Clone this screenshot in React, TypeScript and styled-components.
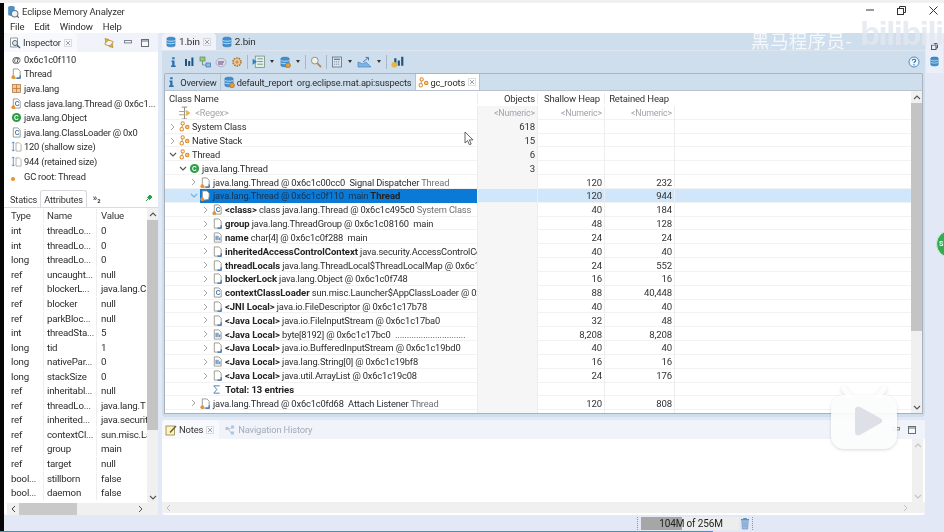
import React from "react";
import styled, { createGlobalStyle } from "styled-components";

const Global = createGlobalStyle`
  html, body { margin: 0; padding: 0; background: #e3e8f6; overflow: hidden; }
  #root { width: 944px; height: 532px; }
`;

const Screen = styled.div`
  position: relative; width: 944px; height: 532px; overflow: hidden;
  display: flex; flex-direction: column;
  font-family: Roboto, "Noto Sans CJK SC", sans-serif; font-size: 9.3px; letter-spacing: -.15px; color: #2c2c2c;
  background: #e3e8f6; filter: blur(0.35px);
  svg { flex: none; }
`;
const TopEdge = styled.div`height: 3px; background: #f0f0f0; flex: none;`;
const Frame = styled.div`flex: 1; display: flex; min-height: 0;`;
const BlackEdge = styled.div`width: 4px; background: #050505; flex: none;`;
const Window = styled.div`flex: 1; display: flex; flex-direction: column; min-width: 0;`;
const TitleBar = styled.div`height: 16px; background: #fff; display: flex; align-items: center; gap: 3px; padding-left: 2px; flex: none; font-size: 9.5px; color: #333;`;
const TitleText = styled.span`flex: 1;`;
const WinButtons = styled.div`display: flex; align-items: center; gap: 23px; padding: 0 6px 2px 0; color: #333;`;
const MenuBar = styled.div`height: 14px; background: #fff; display: flex; align-items: center; gap: 10px; padding-left: 6px; flex: none; font-size: 9.5px;`;
const Workbench = styled.div`flex: 1; display: flex; min-height: 0;`;
const LeftCol = styled.div`width: 154px; flex: none; display: flex; flex-direction: column;`;
const MainCol = styled.div`width: 763px; margin-left: 4px; flex: none; display: flex; flex-direction: column;`;
const Trim = styled.div`flex: 1; display: flex; flex-direction: column; align-items: center;`;
const Panel = styled.div<{ $grow?: boolean }>`
  background: #fff; border-radius: 3px; display: flex; flex-direction: column; overflow: hidden;
  ${p => p.$grow ? "flex: 1; min-height: 0;" : ""}
`;
const NotesPanel = styled(Panel)`height: 95px; flex: none; margin-top: 3px;`;
const ViewTabs = styled.div`height: 19px; flex: none; display: flex; align-items: center; background: #f1f3fb; position: relative;`;
const ViewTab = styled.div<{ $dim?: boolean; $active?: boolean; $pl: number }>`
  height: 19px; display: flex; align-items: center; gap: 2px; padding: 0 5px 0 ${p => p.$pl}px;
  color: ${p => p.$dim ? "#a4abb6" : "#333"};
  background: ${p => p.$active ? "#f8f9fc" : "transparent"};
  border-radius: 4px 4px 0 0; font-size: 9.4px;
`;
const CloseBox = styled.span`display: flex; margin-left: 1px;`;
const Spacer = styled.div`flex: 1;`;
const ViewIcons = styled.div<{ $gap: number }>`display: flex; align-items: center; gap: ${p => p.$gap}px; padding-right: 9px;`;
const InspectorList = styled.div`flex: none; padding: 0 0 0 7px; height: 134px;`;
const InfoRow = styled.div`height: 14.6px; display: flex; align-items: center; gap: 2px; white-space: nowrap; overflow: hidden; font-size: 9.3px; letter-spacing: -.2px;`;
const IconSlot = styled.span`width: 11px; height: 11px; flex: none; display: inline-flex; align-items: center; justify-content: center;`;
const SubTabs = styled.div`height: 18px; margin-top: 3px; flex: none; display: flex; align-items: flex-end; padding-left: 3px; font-size: 9.2px; position: relative; border-bottom: 1px solid #d8dbe0;`;
const SubTab = styled.div<{ $active?: boolean }>`
  height: 15px; display: flex; align-items: center; padding: 0 3px; color: #333;
  ${p => p.$active ? "border: 1px solid #d5d8dd; border-bottom: none; border-radius: 3px 3px 0 0; background:#fff; height:16px;" : ""}
`;
const More = styled.span`padding-left: 6px; font-size: 9px; font-weight: 700; color: #444; align-self: center;`;
const Pin = styled.span`position: absolute; right: 6px; top: 6px; display: flex;`;
const AttrArea = styled.div`flex: 1; display: flex; min-height: 0; padding-left: 3px;`;
const AttrTable = styled.div`flex: 1; min-width: 0; display: flex; flex-direction: column; overflow: hidden;`;
const AttrRow = styled.div`height: 14.55px; flex: none; display: grid; grid-template-columns: 36px 54px 1fr; font-size: 9.7px; letter-spacing: -.2px; align-items: center;`;
const AttrHead = styled(AttrRow)`height: 16px; padding-top: 1px; box-sizing: border-box; color: #333; align-items: start;`;
const AttrCell = styled.div`white-space: nowrap; overflow: hidden; padding-left: 4px; line-height: 14px;`;
const AttrNameCell = styled(AttrCell)`border-left: 1px solid #edeef0; border-right: 1px solid #edeef0; padding-left: 3px;`;
const VScroll = styled.div`width: 11px; flex: none; background: #f0f0f0; display: flex; flex-direction: column; align-items: center;`;
const Thumb = styled.div<{ $h: number }>`background: #c4c4c4; width: 100%; height: ${p => p.$h}px; flex: none;`;
const Arrow = styled.div`height: 12px; width: 100%; flex: none; display: flex; align-items: center; justify-content: center;`;
const ArrowEnd = styled(Arrow)`margin-top: auto;`;
const HScroll = styled.div`height: 12px; flex: none; display: flex; align-items: center; background: #f0f0f0; margin-left: 3px;`;
const HThumb = styled.div<{ $w: number }>`height: 12px; background: #c9c9c9; width: ${p => p.$w}px; flex: none;`;
const HArrow = styled.div`width: 12px; height: 12px; flex: none; display: flex; align-items: center; justify-content: center;`;
const EditorTabs = styled.div`height: 17px; flex: none; background: #cfdeed; display: flex; align-items: flex-end;`;
const EditorTab = styled.div<{ $active?: boolean }>`
  height: 17px; display: flex; align-items: center; gap: 2px; font-size: 9.9px;
  padding: 0 5px 0 ${p => p.$active ? 3 : 5}px;
  background: ${p => p.$active ? "#eff3f9" : "transparent"}; border-radius: 4px 4px 0 0;
`;
const EditorBody = styled.div`flex: 1; min-height: 0; display: flex; flex-direction: column; background: #cfdeed; padding: 0 2px 3px 2px; border-top: 1px solid #dfe5ef;`;
const Toolbar = styled.div`height: 22px; flex: none; display: flex; align-items: center; padding: 0 0 1px 3px; gap: 4px; box-sizing: border-box;`;
const ToolSep = styled.span`width: 1px; height: 14px; background: #a9b6c6;`;
const Drop = styled.span`width: 0; height: 0; border-left: 2.5px solid transparent; border-right: 2.5px solid transparent; border-top: 3px solid #333; margin: 0 1px;`;
const HelpBtn = styled.span`margin-left: auto; margin-right: 3px; display: flex;`;
const InfoBox = styled.span`display: flex; width: 12px; justify-content: center;`;
const InnerTabs = styled.div`height: 16px; flex: none; background: #cfdeed; border: 1px solid #aab4c0; border-bottom: 1px solid #b8c3cf; border-radius: 2px 2px 0 0; display: flex; align-items: stretch;`;
const InnerTab = styled.div<{ $active?: boolean }>`
  display: flex; align-items: center; gap: 2px; padding: 0 3px 0 2px; font-size: 9.3px; white-space: nowrap;
  border-right: 1px solid #b8c3cf;
  background: ${p => p.$active ? "#fff" : "transparent"};
`;
const TableWrap = styled.div`flex: 1; min-height: 0; display: flex; background: #fff; border: 1px solid #aab0b8; border-top: none; overflow: hidden;`;
const TableMain = styled.div`flex: 1; min-width: 0; overflow: hidden;`;
const Grid = styled.div`display: flex; flex-direction: column;`;
const Row = styled.div<{ $sel?: boolean }>`
  height: 13.83px; flex: none; display: grid; grid-template-columns: 312px 60px 67px 70px 1fr;
  box-shadow: inset 0 -1px 0 #f2f2f2; align-items: center;
  ${p => p.$sel ? "background: #cfe6fb;" : ""}
`;
const HeadRow = styled(Row)`height: 15px; box-shadow: none; color: #333; font-size: 9.5px;`;
const NameCell = styled.div<{ $indent: number }>`
  position: relative; display: flex; align-items: center; height: 100%; white-space: nowrap; overflow: hidden;
  padding-left: ${p => p.$indent}px; gap: 2px; min-width: 0;
`;
const Chevron = styled.span`width: 9px; flex: none; display: inline-flex; justify-content: center; align-items: center;`;
const NameBody = styled.span<{ $sel?: boolean }>`
  display: inline-flex; flex: 1; min-width: 0; gap: 2px; height: 100%; align-items: center; overflow: hidden;
  ${p => p.$sel ? "background: #0a7ad6; color: #14324e;" : ""}
`;
const Muted = styled.span`color: #707070;`;
const Leader = styled.span`color: #3a3a3a; letter-spacing: -.1px;`;
const RegexText = styled.span`color: #a5a5a5; font-size: 9.2px;`;
const Strong = styled.b`font-weight: 700; color: #222; font-size: 9.5px; letter-spacing: -.03px;`;
const NumCell = styled.div<{ $shade?: boolean; $dim?: boolean }>`
  height: 100%; display: flex; align-items: center; justify-content: flex-end; padding-right: 2px;
  ${p => p.$shade ? "background: #f6f6f7;" : ""}
  border-left: 1px solid #ededed;
  color: ${p => p.$dim ? "#9ea3a8" : "#333"};
  font-size: ${p => p.$dim ? "8.8px" : "9.6px"};
`;
const HeadCell = styled.div`padding-left: 4px; white-space: nowrap;`;
const HeadNum = styled.div<{ $pad: number }>`text-align: right; padding-right: ${p => p.$pad}px; white-space: nowrap; border-left: 1px solid #ededed;`;
const ScrollPad = styled.div`width: 11px; flex: none; background: #f0f0f0; display: flex; flex-direction: column;`;
const NotesBody = styled.div`flex: 1; min-height: 0; display: flex; padding-right: 2px;`;
const NotesText = styled.div`flex: 1; background: #fff;`;
const NotesScroll = styled.div`width: 11px; background: #f0f0f0; display: flex; flex-direction: column;`;
const NotesH = styled.div`height: 11px; background: #f0f0f0; display: flex; justify-content: space-between; align-items: center; padding: 0 17px 0 4px; flex: none; margin-bottom: 2px;`;
const Status = styled.div`height: 17px; flex: none; display: flex; align-items: center; padding-left: 631px;`;
const HeapBar = styled.div`width: 98px; height: 13px; background: #ededed; position: relative; display: flex; align-items: center; justify-content: center; font-size: 10px;`;
const HeapFill = styled.div`position: absolute; left: 0; top: 0; bottom: 0; width: 41px; background: #a6a6a6;`;
const HeapText = styled.span`position: relative; color: #222; padding-left: 2px;`;
const Trash = styled.span`margin-left: 1px; display: flex;`;
const Dots = styled.span`width: 1px; height: 13px; border-left: 1px dotted #8d93a0; margin: 0 2px;`;
const ProgressLine = styled.div`position: absolute; left: 0; bottom: 0; height: 1px; width: 713px; background: #1ea1d8;`;
const TrimBox = styled.div`width: 17px; height: 30px; background: #ebeff9; border-radius: 0 0 0 4px; display: flex; flex-direction: column; align-items: center; padding-top: 10px; gap: 6px; box-sizing: content-box;`;
const Watermark = styled.div`position: absolute; left: 751px; top: 27px; color: rgba(255,255,255,.78); font-size: 18.5px; letter-spacing: .4px; pointer-events: none; font-family: "Noto Sans CJK SC", sans-serif; white-space: nowrap;`;
const Bili = styled.div`position: absolute; left: 860px; top: 14px; color: rgba(226,231,239,.82); font-size: 33px; font-weight: 700; pointer-events: none; letter-spacing: -1.6px; font-family: "Liberation Sans", sans-serif; white-space: nowrap; line-height: 40px;`;
const TvBadge = styled.div`position: absolute; left: 829px; top: 383px; pointer-events: none; display: flex; filter: drop-shadow(0 1px 1.5px rgba(60,70,90,.22));`;
const Cursor = styled.div`position: absolute; left: 464px; top: 131px; pointer-events: none; display: flex;`;
const GreenBall = styled.div`position: absolute; left: 936px; top: 230px; width: 28px; height: 28px; border-radius: 50%; background: #33ac55; border: 1px solid #d8e8dc; color: #fff; font-size: 7px; font-weight: 700; padding-left: 2px; display: flex; align-items: center; box-sizing: border-box;`;

/* ---------- icons ---------- */
const Svg: React.FC<{ s?: number; children: React.ReactNode }> = ({ s = 11, children }) => (
  <svg width={s} height={s} viewBox="0 0 12 12" fill="none">{children}</svg>
);
const Close = () => (
  <CloseBox>
    <svg width="8" height="8" viewBox="0 0 8 8" fill="none">
      <rect x=".5" y=".5" width="7" height="7" stroke="#aeb2b8" strokeWidth=".7" strokeDasharray="1.200 .8" />
      <path d="M2 2l4 4M6 2L2 6" stroke="#8f949b" strokeWidth=".9" />
    </svg>
  </CloseBox>
);
const FileI = ({ dot = false }) => (
  <Svg>
    <path d="M2.500 1h5l2.500 2.500V11H2.500z" fill="#fff" stroke="#8a8a80" strokeWidth=".9" />
    <path d="M10 8v3H6" stroke="#2f6fb5" strokeWidth="1.200" />
    {dot && <circle cx="2.500" cy="10" r="2" fill="#e8922a" />}
  </Svg>
);
const ClassI = ({ dot = false }) => (
  <Svg>
    <path d="M2.500 1h5l2.500 2.500V11H2.500z" fill="#fff" stroke="#8a8a80" strokeWidth=".9" />
    <text x="4" y="9" fontSize="7" fontWeight="700" fill="#3b76b6" fontFamily="Liberation Sans">C</text>
    {dot && <circle cx="2.500" cy="10" r="2" fill="#e8922a" />}
  </Svg>
);
const ArrayI = () => (
  <Svg>
    <path d="M2.500 1h5l2.500 2.500V11H2.500z" fill="#fff" stroke="#8a8a80" strokeWidth=".9" />
    <path d="M4.500 4v5M6.500 4v5M8.500 6v3" stroke="#3b76b6" strokeWidth="1.200" />
  </Svg>
);
const RootI = () => (
  <Svg>
    <circle cx="4" cy="2.600" r="1.800" stroke="#d98a2b" strokeWidth="1.100" />
    <circle cx="3" cy="9" r="1.900" stroke="#d98a2b" strokeWidth="1.100" />
    <circle cx="9" cy="6.600" r="1.900" stroke="#d98a2b" strokeWidth="1.100" fill="#f3c58a" />
    <path d="M3.500 4.500v2.500" stroke="#d98a2b" />
  </Svg>
);
const GreenC = () => (
  <Svg>
    <circle cx="6" cy="6" r="5" fill="#2f9e46" />
    <text x="3.400" y="8.400" fontSize="7" fontWeight="700" fill="#fff" fontFamily="Liberation Sans">C</text>
  </Svg>
);
const Db = ({ dot = false, s = 11 }) => (
  <Svg s={s}>
    <path d="M2 2.400C2 .8 10 .8 10 2.400v7.200c0 1.600-8 1.600-8 0z" fill="#3f8fd0" stroke="#2a6aa5" strokeWidth=".6" />
    <path d="M2 4.500c1.600 1 6.400 1 8 0M2 7c1.600 1 6.400 1 8 0" stroke="#d7ecfa" strokeWidth=".8" />
    {dot && <circle cx="9" cy="9.300" r="2.500" fill="#e09b3d" stroke="#8c6223" strokeWidth=".5" />}
  </Svg>
);
const InfoI = () => (
  <svg width="9" height="12" viewBox="0 0 9 12"><path d="M3.200 1.200h2.400v2H3.200zM2.500 4.500h3v5h1.200V11H2V9.500h1.200V6h-.7z" fill="#2a6fb0" /></svg>
);
const Bars = () => (
  <Svg s={12}><path d="M2 3h2v7H2zM5.200 5h2v5h-2zM8.400 1.500h2V10h-2z" fill="#20527e" /></Svg>
);
const Tree = () => (
  <Svg s={12}>
    <rect x="1" y="1" width="5" height="4" fill="#9ac77f" stroke="#5f8c4a" strokeWidth=".7" />
    <rect x="7" y="7" width="4.500" height="4" fill="#8cbce4" stroke="#3a73a8" strokeWidth=".7" />
    <path d="M3.500 5v4H7" stroke="#6b7c86" strokeWidth=".8" />
  </Svg>
);
const Oql = () => (
  <Svg s={12}><ellipse cx="6" cy="6.500" rx="5" ry="4.200" fill="#d9dde6" stroke="#9aa2b0" strokeWidth=".7" /><path d="M3 6h6M3 8h5" stroke="#6d3f90" strokeWidth="1" /></Svg>
);
const Gear = () => (
  <Svg s={12}><circle cx="6" cy="6" r="4" fill="#e9c597" stroke="#a97b3c" strokeWidth="1.600" strokeDasharray="1.600 .9" /><circle cx="6" cy="6" r="1.500" fill="#c99050" /></Svg>
);
const ListPlay = () => (
  <Svg s={13}>
    <rect x="3" y="1" width="8.500" height="10.500" fill="#e4eef2" stroke="#6f8a86" strokeWidth=".7" />
    <path d="M5 3.500h5M5 6h5M5 8.500h5" stroke="#71a36b" strokeWidth=".9" />
    <path d="M.6 3.500l4 2.700-4 2.700z" fill="#2f7fb8" />
  </Svg>
);
const Mag = () => (
  <Svg s={12}><circle cx="4.800" cy="4.600" r="3.400" fill="#f4f1e4" stroke="#8d9298" strokeWidth="1" /><path d="M7.400 7.400l3.600 3.600" stroke="#b08a4a" strokeWidth="1.800" /></Svg>
);
const Calc = () => (
  <Svg s={12}><rect x="1.500" y="1" width="9" height="10" fill="#d8e6ef" stroke="#5c7080" strokeWidth=".8" /><path d="M3 3.200h6" stroke="#45617a" strokeWidth="1.100" /><path d="M3 5.800h6M3 8.200h6" stroke="#7c93a5" strokeWidth="1" strokeDasharray="1.200 .8" /></Svg>
);
const Export = () => (
  <svg width="15" height="12" viewBox="0 0 15 12" fill="none"><path d="M1 11V6l5 2 3-2 5 5z" fill="#7fb4e6" stroke="#4a86c0" strokeWidth=".7" /><path d="M6 6l5-4M8.500 1.400h3v3" stroke="#3d7fbb" strokeWidth="1" /></svg>
);
const BarsPin = () => (
  <Svg s={13}><path d="M3 3h2v7H3zM6.200 5h2v5H6.200zM9.400 1.500h2V10h-2z" fill="#20527e" /><circle cx="3" cy="9" r="2.600" fill="#e7b54a" /></Svg>
);
const Help = () => (
  <svg width="12" height="12" viewBox="0 0 12 12" fill="none"><circle cx="6" cy="6" r="5" fill="#f1f6fb" stroke="#4d8ac2" strokeWidth="1" /><path d="M4.300 4.600c.2-2 3.600-1.800 3.400.2-.1 1-1.700 1.100-1.700 2.200" stroke="#2b6ca8" strokeWidth="1.100" /><circle cx="6" cy="8.800" r=".7" fill="#2b6ca8" /></svg>
);
const InspectI = () => (
  <Svg s={12}><path d="M1.500 1h7v9h-7z" fill="#fff" stroke="#7a7f86" strokeWidth=".8" /><circle cx="6" cy="6" r="2.500" fill="#dceaf4" stroke="#4c5a68" strokeWidth=".9" /><path d="M8 8l3 3" stroke="#4c5a68" strokeWidth="1.200" /></Svg>
);
const SyncI = () => (
  <Svg s={12}><path d="M2 1.500l4 1-3 3zM10 10.500l-4-1 3-3z" fill="#e1b03f" stroke="#a57b1f" strokeWidth=".6" /><path d="M5 3l5 1.500-.5 3M7 9L2 7.500l.5-3" stroke="#c99a30" strokeWidth="1" /></Svg>
);
const MinI = () => <svg width="8" height="5" viewBox="0 0 8 5"><rect x=".5" y=".5" width="7" height="2.400" fill="#f3f4f8" stroke="#7d8490" /></svg>;
const MaxI = () => <svg width="8" height="8" viewBox="0 0 8 8"><rect x=".5" y=".5" width="7" height="7" fill="#f8f9fb" stroke="#666c76" /><path d="M.5 2h7" stroke="#666c76" /></svg>;
const At = () => <Svg><text x="1" y="9.500" fontSize="10" fontWeight="700" fill="#333" fontFamily="Liberation Sans">@</text></Svg>;
const Pkg = () => <Svg><rect x="1.500" y="1.500" width="9" height="9" fill="#edc9a4" stroke="#b5763a" strokeWidth=".8" /><path d="M6 1.500v9M1.500 6h9" stroke="#b5763a" strokeWidth=".8" /></Svg>;
const SizeI = () => (
  <Svg>
    <path d="M2.500 1v10M1 2.500L2.500 1 4 2.500M1 9.500L2.500 11 4 9.500" stroke="#3c7bb5" strokeWidth=".8" />
    <path d="M5.500 2h3.500l2 2v7H5.500z" fill="#fff" stroke="#9a9a90" strokeWidth=".8" />
  </Svg>
);
const Sigma = () => <Svg><path d="M9.500 2H3l3.500 4L3 10h6.500" stroke="#4b78aa" strokeWidth="1" /></Svg>;
const RegexI = () => (
  <Svg s={13}><path d="M6 1v11M3.500 1h5M3.500 12h5" stroke="#8d8d8d" strokeWidth=".9" /><path d="M1 5h6M1 8h6" stroke="#b9a476" strokeWidth="1" /><path d="M7.500 3.500l4 3-4 3z" fill="#e2b656" /></Svg>
);
const NotesI = () => <Svg s={12}><rect x="1" y="2" width="8.500" height="9" fill="#fff3b8" stroke="#8d8255" strokeWidth=".8" /><path d="M4.500 8l6-6.500 1 1L5.500 9z" fill="#6d5b32" /></Svg>;
const NavI = () => <Svg s={12}><path d="M1.500 3h3v3h-3zM7 1.500h3v3H7zM7 7.500h3v3H7z" fill="#a8c8e8" /><path d="M4.500 4.500H7M4.500 5L7 9" stroke="#a5b6c8" strokeWidth=".7" /></Svg>;
const TrashI = () => <svg width="10" height="13" viewBox="0 0 10 13" fill="none"><path d="M1 2.500h8M3.500 2.500v-1h3v1" stroke="#5e8fc0" /><path d="M1.800 3l.6 9h5.200l.6-9z" fill="#a9c5e2" stroke="#5e8fc0" strokeWidth=".7" /><path d="M4 4.500v6M6 4.500v6" stroke="#5e8fc0" strokeWidth=".7" /></svg>;
const AppI = () => <Svg s={13}><path d="M2 2C2 .6 8 .6 8 2v7C8 10.400 2 10.400 2 9z" fill="#4c90c8" /><circle cx="8" cy="8" r="3" fill="#eef3f8" stroke="#65788a" /><path d="M10 10l2 2" stroke="#65788a" strokeWidth="1.200" /></Svg>;
const ChevR = ({ c = "#9a9a9a" }: { c?: string }) => <svg width="5" height="8" viewBox="0 0 5 8" fill="none"><path d="M1 1l3 3-3 3" stroke={c} strokeWidth=".9" /></svg>;
const ChevD = ({ c = "#555" }: { c?: string }) => <svg width="8" height="5" viewBox="0 0 8 5" fill="none"><path d="M1 1l3 3 3-3" stroke={c} strokeWidth="1.100" /></svg>;
const ChevU = ({ c = "#555" }: { c?: string }) => <svg width="8" height="5" viewBox="0 0 8 5" fill="none"><path d="M1 4l3-3 3 3" stroke={c} strokeWidth="1.100" /></svg>;
const ChevL = ({ c = "#444" }: { c?: string }) => <svg width="5" height="8" viewBox="0 0 5 8" fill="none"><path d="M4 1L1 4l3 3" stroke={c} strokeWidth="1" /></svg>;

/* ---------- data ---------- */
const info: [React.ReactNode, string][] = [
  [<At />, "0x6c1c0f110"],
  [<FileI dot />, "Thread"],
  [<Pkg />, "java.lang"],
  [<ClassI dot />, "class java.lang.Thread @ 0x6c1..."],
  [<GreenC />, "java.lang.Object"],
  [<ClassI />, "java.lang.ClassLoader @ 0x0"],
  [<SizeI />, "120 (shallow size)"],
  [<SizeI />, "944 (retained size)"],
  [<svg width="11" height="11" viewBox="0 0 11 11"><circle cx="2" cy="8" r="2" fill="#e8922a" /></svg>, "GC root: Thread"],
];
const attrs = [
  ["int","threadLo...","0"],["int","threadLo...","0"],["long","threadLo...","0"],["ref","uncaught...","null"],
  ["ref","blockerL...","java.lang.C"],["ref","blocker","null"],["ref","parkBloc...","null"],["int","threadSta...","5"],
  ["long","tid","1"],["long","nativePar...","0"],["long","stackSize","0"],["ref","inheritabl...","null"],
  ["ref","threadLo...","java.lang.T"],["ref","inherited...","java.securit"],["ref","contextCl...","sun.misc.La"],
  ["ref","group","main"],["ref","target","null"],["bool...","stillborn","false"],["bool...","daemon","false"],
];
type R = { ind: number; chev?: "r" | "d"; icon?: React.ReactNode; text: React.ReactNode; o?: string; s?: string; r?: string; sel?: boolean };
const rows: R[] = [
  { ind: 3, chev: "r", icon: <RootI />, text: "System Class", o: "618" },
  { ind: 3, chev: "r", icon: <RootI />, text: "Native Stack", o: "15" },
  { ind: 3, chev: "d", icon: <RootI />, text: "Thread", o: "6" },
  { ind: 13, chev: "d", icon: <GreenC />, text: "java.lang.Thread", o: "3" },
  { ind: 24, chev: "r", icon: <FileI dot />, text: <>java.lang.Thread @ 0x6c1c00cc0&nbsp; Signal Dispatcher <Muted>Thread</Muted></>, s: "120", r: "232" },
  { ind: 24, chev: "d", icon: <FileI dot />, text: <>java.lang.Thread @ 0x6c1c0f110&nbsp; main <Strong>Thread</Strong></>, s: "120", r: "944", sel: true },
  { ind: 36, chev: "r", icon: <ClassI dot />, text: <><Strong>&lt;class&gt;</Strong>&nbsp;class java.lang.Thread @ 0x6c1c495c0 <Muted>System Class</Muted></>, s: "40", r: "184" },
  { ind: 36, chev: "r", icon: <FileI />, text: <><Strong>group</Strong>&nbsp;java.lang.ThreadGroup @ 0x6c1c08160&nbsp; main</>, s: "48", r: "128" },
  { ind: 36, chev: "r", icon: <ArrayI />, text: <><Strong>name</Strong>&nbsp;char[4] @ 0x6c1c0f288&nbsp; main</>, s: "24", r: "24" },
  { ind: 36, chev: "r", icon: <FileI />, text: <><Strong>inheritedAccessControlContext</Strong>&nbsp;java.security.AccessControlCo</>, s: "40", r: "40" },
  { ind: 36, chev: "r", icon: <FileI />, text: <><Strong>threadLocals</Strong>&nbsp;java.lang.ThreadLocal$ThreadLocalMap @ 0x6c1</>, s: "24", r: "552" },
  { ind: 36, chev: "r", icon: <FileI />, text: <><Strong>blockerLock</Strong>&nbsp;java.lang.Object @ 0x6c1c0f748</>, s: "16", r: "16" },
  { ind: 36, chev: "r", icon: <ClassI />, text: <><Strong>contextClassLoader</Strong>&nbsp;sun.misc.Launcher$AppClassLoader @ 0x</>, s: "88", r: "40,448" },
  { ind: 36, chev: "r", icon: <FileI />, text: <><Strong>&lt;JNI Local&gt;</Strong>&nbsp;java.io.FileDescriptor @ 0x6c1c17b78</>, s: "40", r: "40" },
  { ind: 36, chev: "r", icon: <FileI />, text: <><Strong>&lt;Java Local&gt;</Strong>&nbsp;java.io.FileInputStream @ 0x6c1c17ba0</>, s: "32", r: "48" },
  { ind: 36, chev: "r", icon: <ArrayI />, text: <><Strong>&lt;Java Local&gt;</Strong>&nbsp;byte[8192] @ 0x6c1c17bc0 &nbsp;<Leader>..............................</Leader></>, s: "8,208", r: "8,208" },
  { ind: 36, chev: "r", icon: <FileI />, text: <><Strong>&lt;Java Local&gt;</Strong>&nbsp;java.io.BufferedInputStream @ 0x6c1c19bd0</>, s: "40", r: "40" },
  { ind: 36, chev: "r", icon: <ArrayI />, text: <><Strong>&lt;Java Local&gt;</Strong>&nbsp;java.lang.String[0] @ 0x6c1c19bf8</>, s: "16", r: "16" },
  { ind: 36, chev: "r", icon: <FileI />, text: <><Strong>&lt;Java Local&gt;</Strong>&nbsp;java.util.ArrayList @ 0x6c1c19c08</>, s: "24", r: "176" },
  { ind: 36, icon: <Chevron><Sigma /></Chevron>, text: <Strong>&nbsp;Total: 13 entries</Strong> },
  { ind: 24, chev: "r", icon: <FileI dot />, text: <>java.lang.Thread @ 0x6c1c0fd68&nbsp; Attach Listener <Muted>Thread</Muted></>, s: "120", r: "808" },
  { ind: 36, icon: <Sigma />, text: "" },
];

export default function App() {
  return (
    <Screen>
      <Global />
      <TopEdge />
      <Frame>
        <BlackEdge />
        <Window>
          <TitleBar>
            <AppI />
            <TitleText>Eclipse Memory Analyzer</TitleText>
            <WinButtons>
              <svg width="8" height="2" viewBox="0 0 8 2"><path d="M0 1h8" stroke="#333" /></svg>
              <svg width="9" height="9" viewBox="0 0 9 9" fill="none"><rect x=".5" y="2.500" width="6" height="6" stroke="#333" /><path d="M2.500 2.500v-2h6v6h-2" stroke="#333" /></svg>
              <svg width="9" height="9" viewBox="0 0 9 9"><path d="M.5.5l8 8M8.500.5l-8 8" stroke="#333" /></svg>
            </WinButtons>
          </TitleBar>
          <MenuBar><span>File</span><span>Edit</span><span>Window</span><span>Help</span></MenuBar>
          <Workbench>
            <LeftCol>
              <Panel $grow>
                <ViewTabs>
                  <ViewTab $active $pl={5}><InspectI />Inspector<Close /></ViewTab>
                  <Spacer />
                  <ViewIcons $gap={9}><SyncI /><MinI /><MaxI /></ViewIcons>
                </ViewTabs>
                <InspectorList>
                  {info.map(([ic, t], i) => (
                    <InfoRow key={i}><IconSlot>{ic}</IconSlot>{t}</InfoRow>
                  ))}
                </InspectorList>
                <SubTabs>
                  <SubTab>Statics</SubTab>
                  <SubTab $active>Attributes</SubTab>
                  <More>»₂</More>
                  <Pin><svg width="7" height="7" viewBox="0 0 7 7"><path d="M1 6l2-2M2.500 2.500L5 0l2 2-2.500 2.500z" stroke="#2f9e46" fill="#2f9e46" /></svg></Pin>
                </SubTabs>
                <AttrArea>
                  <AttrTable>
                    <AttrHead><AttrCell>Type</AttrCell><AttrNameCell>Name</AttrNameCell><AttrCell>Value</AttrCell></AttrHead>
                    {attrs.map((a, i) => (
                      <AttrRow key={i}><AttrCell>{a[0]}</AttrCell><AttrNameCell>{a[1]}</AttrNameCell><AttrCell>{a[2]}</AttrCell></AttrRow>
                    ))}
                  </AttrTable>
                  <VScroll>
                    <Arrow><ChevU /></Arrow>
                    <Thumb $h={210} />
                    <ArrowEnd><ChevD /></ArrowEnd>
                  </VScroll>
                </AttrArea>
                <HScroll>
                  <HArrow><ChevL /></HArrow>
                  <HThumb $w={58} />
                  <Spacer />
                  <HArrow><ChevR c="#444" /></HArrow>
                  <HArrow />
                </HScroll>
              </Panel>
            </LeftCol>
            <MainCol>
              <Panel $grow>
                <EditorTabs>
                  <EditorTab $active><Db s={12} />1.bin<Close /></EditorTab>
                  <EditorTab><Db s={12} />2.bin</EditorTab>
                </EditorTabs>
                <EditorBody>
                  <Toolbar>
                    <InfoBox><InfoI /></InfoBox><Bars /><Tree /><Oql /><Gear /><ToolSep />
                    <ListPlay /><Drop /><Db dot s={12} /><Drop /><ToolSep /><Mag /><ToolSep /><Calc /><Drop /><Export /><Drop /><ToolSep /><BarsPin />
                    <HelpBtn><Help /></HelpBtn>
                  </Toolbar>
                  <InnerTabs>
                    <InnerTab><InfoI />&nbsp;Overview</InnerTab>
                    <InnerTab><Db dot s={12} />default_report&nbsp; org.eclipse.mat.api:suspects</InnerTab>
                    <InnerTab $active><RootI />gc_roots<Close /></InnerTab>
                  </InnerTabs>
                  <TableWrap>
                    <TableMain>
                      <Grid>
                        <HeadRow>
                          <HeadCell>Class Name</HeadCell>
                          <HeadNum $pad={2}>Objects</HeadNum><HeadNum $pad={4}>Shallow Heap</HeadNum><HeadNum $pad={5}>Retained Heap</HeadNum><div />
                        </HeadRow>
                        <Row>
                          <NameCell $indent={13}><RegexI /><RegexText>&nbsp;&lt;Regex&gt;</RegexText></NameCell>
                          <NumCell $shade $dim>&lt;Numeric&gt;</NumCell><NumCell $dim>&lt;Numeric&gt;</NumCell><NumCell $dim>&lt;Numeric&gt;</NumCell><NumCell />
                        </Row>
                        {rows.map((r, i) => (
                          <Row key={i} $sel={r.sel}>
                            <NameCell $indent={r.ind}>
                              <Chevron>{r.chev === "r" ? <ChevR /> : r.chev === "d" ? <ChevD c={r.sel ? "#6fb0e6" : "#555"} /> : null}</Chevron>
                              <NameBody $sel={r.sel}>{r.icon}<span>{r.text}</span></NameBody>
                            </NameCell>
                            <NumCell $shade={!r.sel}>{r.o}</NumCell>
                            <NumCell>{r.s}</NumCell>
                            <NumCell>{r.r}</NumCell>
                            <NumCell />
                          </Row>
                        ))}
                      </Grid>
                    </TableMain>
                    <ScrollPad>
                      <Arrow><ChevU /></Arrow>
                      <Thumb $h={228} />
                      <ArrowEnd><ChevD /></ArrowEnd>
                    </ScrollPad>
                  </TableWrap>
                </EditorBody>
              </Panel>
              <NotesPanel>
                <ViewTabs>
                  <ViewTab $active $pl={3}><NotesI />Notes<Close /></ViewTab>
                  <ViewTab $dim $pl={5}><NavI />Navigation History</ViewTab>
                  <Spacer />
                  <ViewIcons $gap={8}><MinI /><MaxI /></ViewIcons>
                </ViewTabs>
                <NotesBody>
                  <NotesText />
                  <NotesScroll>
                    <Arrow><ChevU c="#c4c4c4" /></Arrow>
                    <ArrowEnd><ChevD c="#c4c4c4" /></ArrowEnd>
                  </NotesScroll>
                </NotesBody>
                <NotesH><ChevL c="#bbb" /><ChevR c="#bbb" /></NotesH>
              </NotesPanel>
            </MainCol>
            <Trim>
              <TrimBox>
                <svg width="7" height="7" viewBox="0 0 7 7" fill="none"><rect x=".5" y="2" width="4.500" height="4.500" stroke="#555" /><path d="M2 2V.5h4.500V5H5" stroke="#555" /></svg>
                <Db s={11} />
              </TrimBox>
            </Trim>
          </Workbench>
          <Status>
            <Dots />
            <HeapBar><HeapFill /><HeapText>104M of 256M</HeapText></HeapBar>
            <Trash><TrashI /></Trash>
            <Dots />
          </Status>
        </Window>
      </Frame>
      <ProgressLine />
      <Watermark>黑马程序员-</Watermark>
      <Bili>bilibili</Bili>
      <Cursor>
        <svg width="10" height="15" viewBox="0 0 10 15"><path d="M1 1v11l2.600-2.400 1.800 4.200 1.800-.8-1.800-4.100H9z" fill="#fff" stroke="#555" strokeWidth=".9" /></svg>
      </Cursor>
      <GreenBall>S</GreenBall>
      <TvBadge>
        <svg width="70" height="70" viewBox="0 0 70 70">
          <path d="M20 12l-5-6M50 12l5-6" stroke="#fff" strokeOpacity=".9" strokeWidth="6" strokeLinecap="round" />
          <rect x="2" y="12" width="66" height="54" rx="13" fill="#fff" fillOpacity=".92" />
          <path d="M26 27c0-3 2-4 5-3l20 11c3 1.500 3 4 0 5.500L31 52c-3 1-5 0-5-3z" fill="#dde0e6" />
        </svg>
      </TvBadge>
    </Screen>
  );
}
